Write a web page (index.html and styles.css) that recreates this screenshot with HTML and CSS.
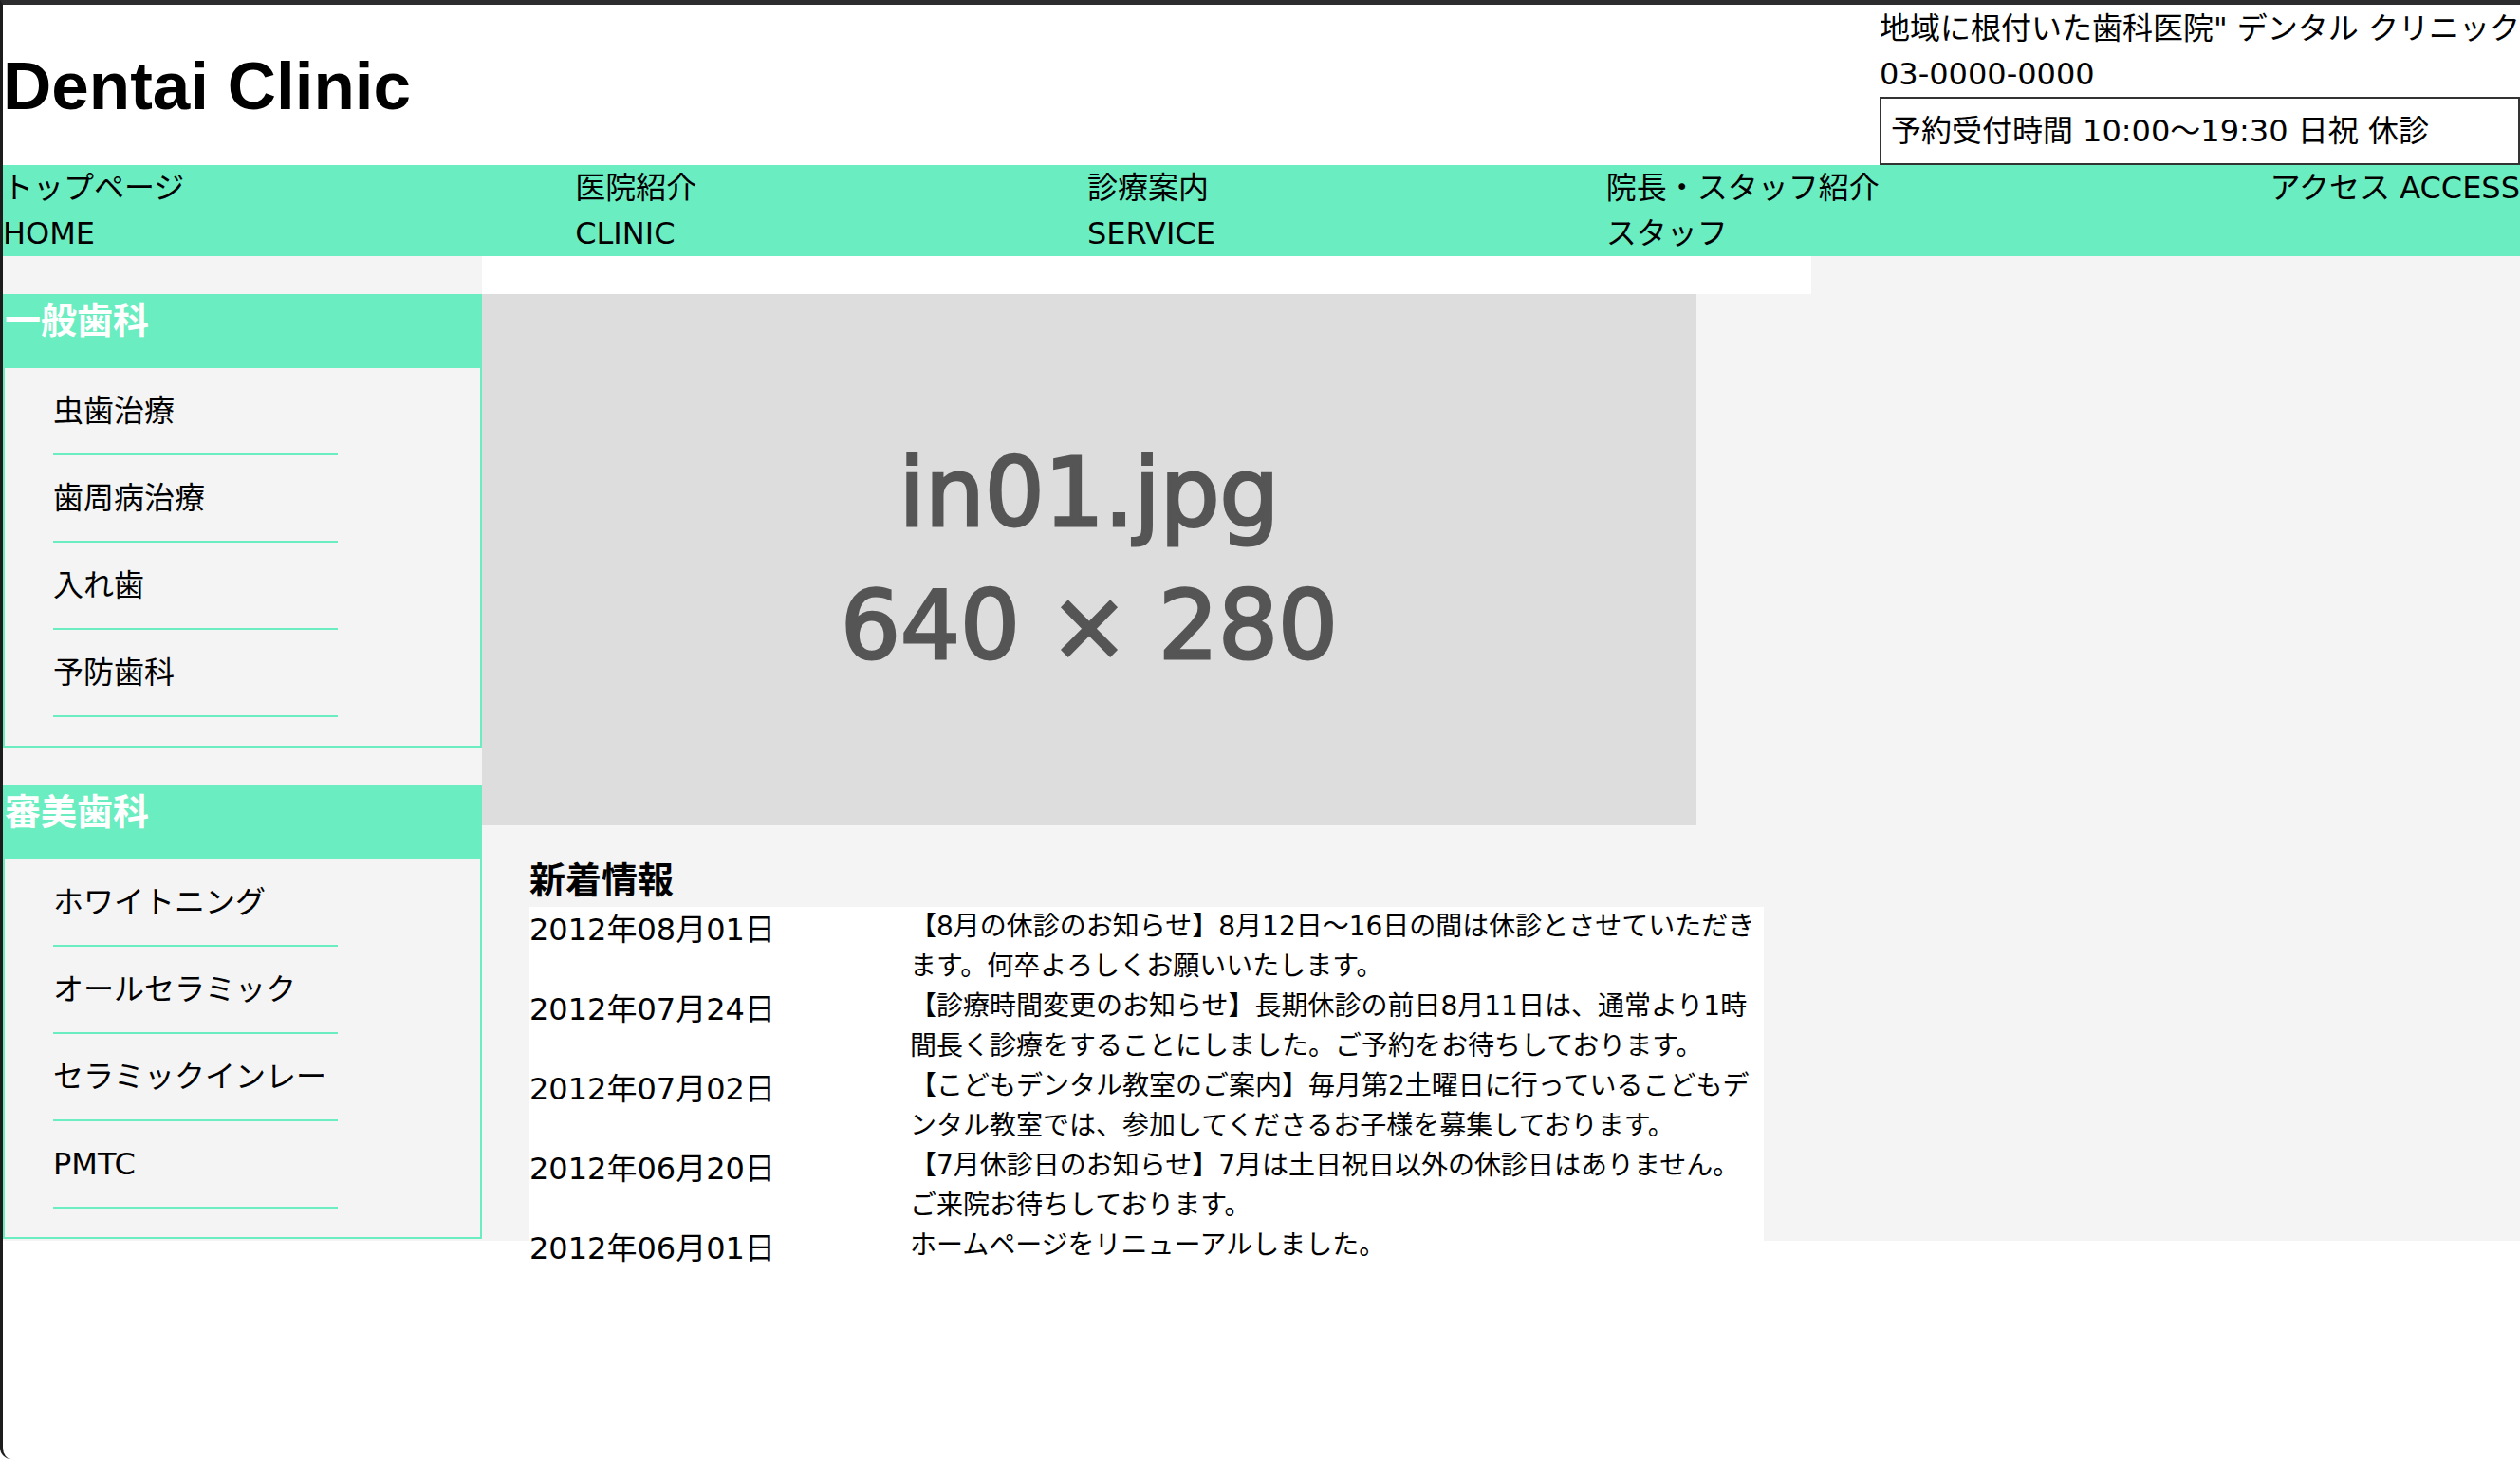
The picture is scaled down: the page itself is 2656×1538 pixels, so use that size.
FILE: index.html
```html
<!DOCTYPE html>
<html lang="ja">
<head>
<meta charset="utf-8">
<title>Dentai Clinic</title>
<link rel="stylesheet" href="styles.css">
</head>
<body>
<div class="window">
  <header class="site-header">
    <h1 class="logo">Dentai Clinic</h1>
    <div class="header-info">
      <p class="tagline">地域に根付いた歯科医院" デンタル クリニック</p>
      <p class="tel">03-0000-0000</p>
      <p class="hours">予約受付時間 10:00〜19:30 日祝 休診</p>
    </div>
  </header>
  <nav class="gnav">
    <a class="gnav-item" href="#"><span>トップページ</span><span>HOME</span></a>
    <a class="gnav-item" href="#"><span>医院紹介</span><span>CLINIC</span></a>
    <a class="gnav-item" href="#"><span>診療案内</span><span>SERVICE</span></a>
    <a class="gnav-item" href="#"><span>院長・スタッフ紹介</span><span>スタッフ</span></a>
    <a class="gnav-item" href="#"><span>アクセス ACCESS</span></a>
  </nav>
  <div class="contents">
    <aside class="side">
      <section class="side-sec">
        <h3 class="side-title">一般歯科</h3>
        <ul class="side-list">
          <li>虫歯治療</li>
          <li>歯周病治療</li>
          <li>入れ歯</li>
          <li>予防歯科</li>
        </ul>
      </section>
      <section class="side-sec">
        <h3 class="side-title">審美歯科</h3>
        <ul class="side-list">
          <li>ホワイトニング</li>
          <li>オールセラミック</li>
          <li>セラミックインレー</li>
          <li>PMTC</li>
        </ul>
      </section>
    </aside>
    <main class="main">
      <div class="main-top"></div>
      <div class="hero"><span>in01.jpg</span><span>640 × 280</span></div>
      <h2 class="news-title">新着情報</h2>
      <dl class="news-list">
        <div class="news-row"><dt class="news-date">2012年08月01日</dt><dd class="news-text">【8月の休診のお知らせ】8月12日〜16日の間は休診とさせていただきます。何卒よろしくお願いいたします。</dd></div>
        <div class="news-row"><dt class="news-date">2012年07月24日</dt><dd class="news-text">【診療時間変更のお知らせ】長期休診の前日8月11日は、通常より1時間長く診療をすることにしました。ご予約をお待ちしております。</dd></div>
        <div class="news-row"><dt class="news-date">2012年07月02日</dt><dd class="news-text">【こどもデンタル教室のご案内】毎月第2土曜日に行っているこどもデンタル教室では、参加してくださるお子様を募集しております。</dd></div>
        <div class="news-row"><dt class="news-date">2012年06月20日</dt><dd class="news-text">【7月休診日のお知らせ】7月は土日祝日以外の休診日はありません。<br>ご来院お待ちしております。</dd></div>
        <div class="news-row"><dt class="news-date">2012年06月01日</dt><dd class="news-text">ホームページをリニューアルしました。</dd></div>
      </dl>
    </main>
    <div class="right"></div>
  </div>
</div>
</body>
</html>
```

FILE: styles.css
```css
html, body {
  margin: 0;
  padding: 0;
  background: #ffffff;
}

body {
  font-family: "DejaVu Sans", "Noto Sans CJK JP", sans-serif;
  color: #000000;
}

.window {
  box-sizing: border-box;
  min-height: 1538px;
  border-top: 5px solid #2c2c2e;
  border-left: 3px solid #1c1c1c;
  border-bottom-left-radius: 12px;
  overflow: hidden;
}

/* header */
.site-header {
  display: flex;
  justify-content: space-between;
  align-items: center;
  padding-top: 1px;
}

.logo {
  margin: 0;
  font-family: "Liberation Sans", "Noto Sans CJK JP", sans-serif;
  font-size: 71px;
  font-weight: bold;
  line-height: 1;
}

.header-info {
  font-size: 32px;
  line-height: 48px;
  white-space: nowrap;
}

.header-info p {
  margin: 0;
}

.hours {
  border: 2px solid #333333;
  padding: 10px;
}

/* global nav */
.gnav {
  display: flex;
  justify-content: space-between;
  background: #6aedc0;
  font-size: 32px;
  line-height: 48px;
}

.gnav-item {
  display: flex;
  flex-direction: column;
  color: #000000;
  text-decoration: none;
  white-space: nowrap;
}

/* contents */
.contents {
  display: flex;
  height: 1038px;
  background: #f4f4f4;
}

.side {
  width: 505px;
  flex: none;
  padding-top: 40px;
}

.side-sec + .side-sec {
  margin-top: 40px;
}

.side-title {
  margin: 0;
  padding: 0 0 22px 2px;
  background: #6aedc0;
  color: #ffffff;
  font-size: 38px;
  font-weight: bold;
  line-height: 56px;
}

.side-list {
  list-style: none;
  margin: 0;
  padding: 0 0 30px 0;
  border: 2px solid #6aedc0;
  border-top: none;
}

.side-list li {
  width: 300px;
  margin-left: 51px;
  padding: 21px 0;
  border-bottom: 2px solid #6aedc0;
  font-size: 32px;
  line-height: 48px;
}

.main {
  width: 1401px;
  flex: none;
  display: flex;
  flex-direction: column;
}

.main-top {
  height: 40px;
  background: #ffffff;
}

.hero {
  width: 1280px;
  height: 560px;
  background: #dddddd;
  color: #555555;
  display: flex;
  flex-direction: column;
  align-items: center;
  justify-content: center;
  font-family: "DejaVu Sans", sans-serif;
  font-size: 99px;
  line-height: 140px;
  -webkit-text-stroke: 3px #555555;
  white-space: nowrap;
}

.news-title {
  margin: 30px 50px 0;
  font-size: 38px;
  font-weight: bold;
  line-height: 56px;
}

.news-list {
  flex: 1 1 0;
  min-height: 0;
  margin: 0 50px;
  background: #ffffff;
}

.news-row {
  display: flex;
}

.news-date {
  width: 401px;
  flex: none;
  font-size: 32px;
  line-height: 48px;
}

.news-text {
  flex: 1;
  margin: 0;
  font-size: 28px;
  line-height: 42px;
}

.right {
  flex: 1;
}
```
